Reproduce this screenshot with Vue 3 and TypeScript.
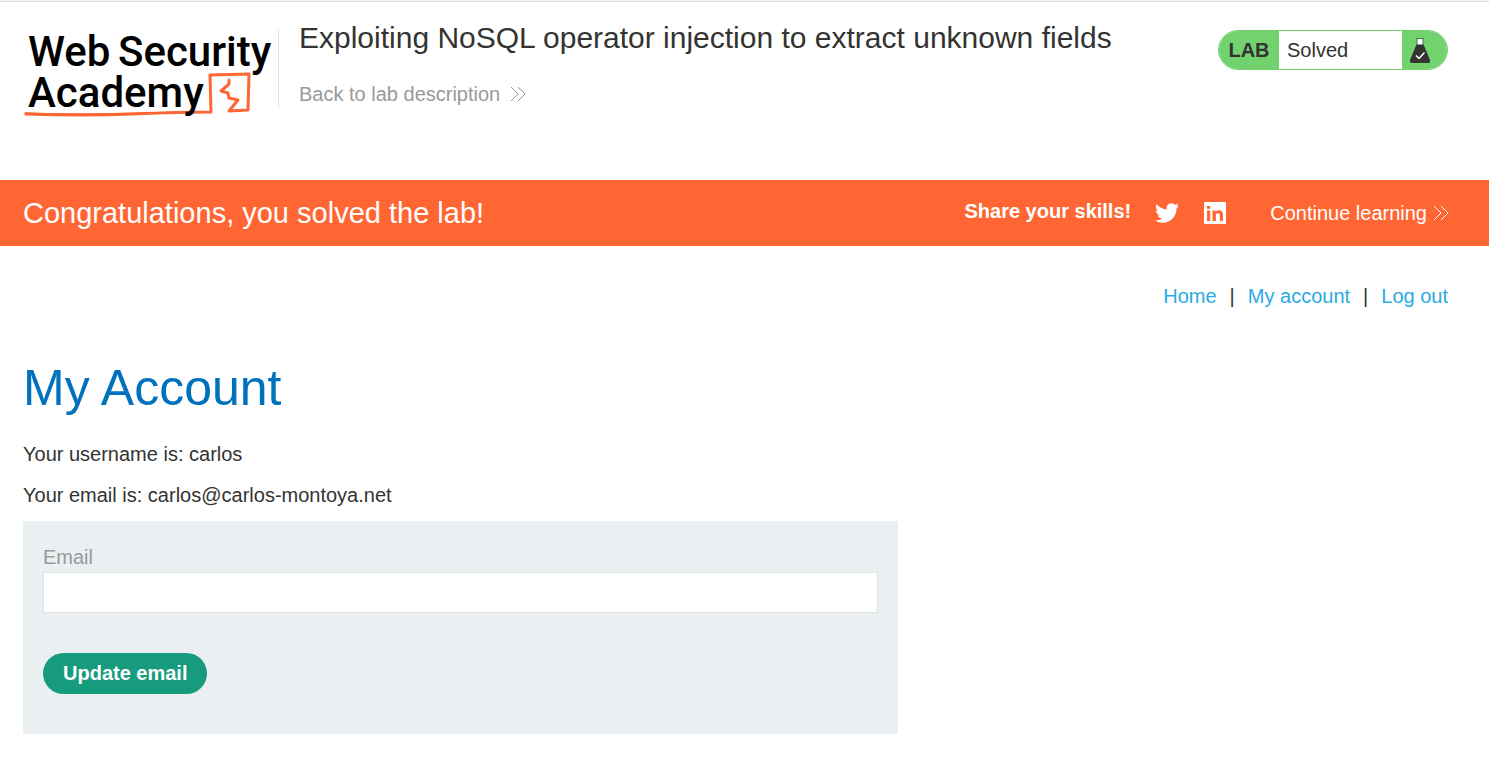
<script setup lang="ts">
import { ref } from 'vue'

interface NavLink {
  label: string
  href: string
}

const username = 'carlos'
const currentEmail = ref<string>('carlos@carlos-montoya.net')
const email = ref<string>('')

const links: NavLink[] = [
  { label: 'Home', href: '#home' },
  { label: 'My account', href: '#my-account' },
  { label: 'Log out', href: '#logout' },
]

function updateEmail(): void {
  if (email.value) {
    currentEmail.value = email.value
    email.value = ''
  }
}
</script>

<template>
  <div class="page">
    <header class="lab-header">
      <a class="logo" href="#academy" aria-label="Web Security Academy">
        <svg width="255" height="92" viewBox="0 0 255 92">
          <g fill="none" stroke="#ff6633" stroke-linejoin="round" stroke-linecap="round">
            <path d="M3 84 Q60 86 110 84 T188 82 L187 45 L226 44 L225 80 L206 81 L215 70 L206 68 L205 63 L198 61 L206 54 L206 50" stroke-width="3" />
            <path d="M2 83 Q50 85 120 83" stroke-width="1.6" />
          </g>
          <g class="logo-text">
            <text x="5" y="36">Web</text>
            <text x="95" y="36">Security</text>
            <text x="5" y="77">Academy</text>
          </g>
        </svg>
      </a>
      <div class="title">
        <h2>Exploiting NoSQL operator injection to extract unknown fields</h2>
        <a class="back" href="#lab">
          Back to lab description
          <svg width="16" height="16" viewBox="0 0 16 16" fill="none" stroke="currentColor"><path d="M1 0l7 7-7 7M8 0l7 7-7 7" /></svg>
        </a>
      </div>
      <div class="status">
        <span class="tag">LAB</span>
        <p>Solved</p>
        <span class="flask">
          <svg width="20" height="25" viewBox="0 0 20 25">
            <path d="M7 1h6v6H7z" fill="#fff" />
            <path d="M6 .5h8M7 1v6M13 1v6" fill="none" stroke="#4c7b49" />
            <path d="M6.500 6.500h7L20 22q.5 3-2 3H2q-2.500 0-2-3z" fill="#333332" />
            <path d="M6 17.500l3 3 5.500-6" fill="none" stroke="#fff" stroke-width="1.500" />
          </svg>
        </span>
      </div>
    </header>

    <section class="banner">
      <h4>Congratulations, you solved the lab!</h4>
      <div class="share">
        <span class="share-label">Share your skills!</span>
        <a href="#twitter" aria-label="Share on Twitter">
          <svg width="24" height="24" viewBox="0 0 24 24" fill="#fff"><path d="M23.953 4.570a10 10 0 01-2.825.775 4.958 4.958 0 002.163-2.723c-.951.555-2.005.959-3.127 1.184a4.920 4.920 0 00-8.384 4.482C7.690 8.095 4.067 6.130 1.640 3.162a4.822 4.822 0 00-.666 2.475c0 1.710.87 3.213 2.188 4.096a4.904 4.904 0 01-2.228-.616v.06a4.923 4.923 0 003.946 4.827 4.996 4.996 0 01-2.212.085 4.936 4.936 0 004.604 3.417 9.867 9.867 0 01-6.102 2.105c-.39 0-.779-.023-1.170-.067a13.995 13.995 0 007.557 2.209c9.053 0 13.998-7.496 13.998-13.985 0-.21 0-.42-.015-.63A9.935 9.935 0 0024 4.590z" /></svg>
        </a>
        <a href="#linkedin" aria-label="Share on LinkedIn">
          <svg width="24" height="24" viewBox="0 0 24 24"><rect x="1" y="1" width="22" height="22" rx="1" fill="#fff" /><path d="M4 9.500h3.200V20H4zM4 5h3.200v2.800H4zM9.500 9.500h3V11C14.500 8.300 20 8.500 20 13.500V20h-3.200v-5.500c0-3.500-4-3-4 0V20H9.500z" fill="#ff6633" /></svg>
        </a>
      </div>
      <a class="continue" href="#next">
        Continue learning
        <svg width="16" height="16" viewBox="0 0 16 16" fill="none" stroke="currentColor"><path d="M1 1l7 7-7 7M8 1l7 7-7 7" /></svg>
      </a>
    </section>

    <main class="content">
      <nav class="top-links">
        <template v-for="(link, i) in links" :key="link.label">
          <span v-if="i > 0">|</span>
          <a :href="link.href">{{ link.label }}</a>
        </template>
      </nav>
      <h1>My Account</h1>
      <p>Your username is: {{ username }}</p>
      <p>Your email is: {{ currentEmail }}</p>
      <form class="login-form" @submit.prevent="updateEmail">
        <label for="email">Email</label>
        <input id="email" v-model="email" type="email" name="email" />
        <button type="submit">Update email</button>
      </form>
    </main>
  </div>
</template>

<style>
body {
  margin: 0;
  background: #fff;
}
</style>

<style scoped>
.page {
  border-top: 1px solid #f6f6f6;
  color: #333332;
  font-family: "Liberation Sans", Arial, sans-serif;
  font-size: 20px;
  line-height: 25px;
}
h1, h2, h4, p {
  margin: 0;
  font-weight: 400;
}
a {
  text-decoration: none;
}
svg {
  display: block;
}
.lab-header {
  display: flex;
  align-items: flex-start;
  padding: 28px 41px 72px 23px;
  border-top: 1px solid #dcdcdc;
}
.logo {
  border-right: 1px solid #e2e2e2;
  height: 78px;
}
.logo svg {
  overflow: visible;
}
.logo-text {
  font-family: Roboto, sans-serif;
  font-size: 42px;
  font-weight: 500;
  fill: #000;
}
.title {
  flex: 1;
  padding-left: 20px;
  margin-top: -12px;
}
.title h2 {
  font-size: 30px;
  line-height: 40px;
}
.back {
  display: inline-flex;
  align-items: center;
  gap: 10px;
  margin-top: 24px;
  color: #999;
}
.status {
  display: flex;
  box-sizing: border-box;
  width: 230px;
  height: 40px;
  border: 1px solid #72d26e;
  border-radius: 20px;
  overflow: hidden;
  line-height: 38px;
}
.tag {
  width: 60px;
  background: #72d26e;
  text-align: center;
  font-weight: 700;
}
.status p {
  flex: 1;
  padding-left: 8px;
}
.flask {
  box-sizing: border-box;
  width: 45px;
  padding: 7px 0 0 8px;
  background: #72d26e;
}
.banner {
  display: flex;
  align-items: center;
  min-height: 66px;
  padding: 0 40px 0 23px;
  background: #ff6633;
  color: #fff;
}
.banner h4 {
  flex: 1;
  font-size: 29px;
  line-height: 36px;
}
.share {
  display: flex;
  align-items: center;
  gap: 24px;
}
.share-label {
  font-weight: 700;
  padding-bottom: 4px;
}
.continue {
  display: flex;
  align-items: center;
  gap: 6px;
  margin-left: 43px;
  color: #fff;
}
.content {
  padding: 38px 41px 30px 23px;
}
.top-links {
  display: flex;
  justify-content: flex-end;
  gap: 13px;
}
.top-links a {
  color: #29abe2;
}
h1 {
  margin: 49px 0 24px;
  color: #0071bc;
  font-size: 50px;
  line-height: 60px;
}
.content p {
  margin-bottom: 16px;
}
.login-form {
  box-sizing: border-box;
  max-width: 875px;
  padding: 24px 20px 40px;
  margin-top: -3px;
  background: #eaeff2;
}
label {
  display: block;
  margin-bottom: 2px;
  color: #999;
}
input {
  display: block;
  box-sizing: border-box;
  width: 100%;
  height: 41px;
  padding: 0 10px;
  border: 1px solid #e2e2e2;
  border-radius: 0;
  background: #fff;
  color: #333332;
  font: inherit;
}
button {
  display: block;
  height: 41px;
  margin-top: 40px;
  padding: 0 20px;
  border: 0;
  border-radius: 21px;
  background: #179b7f;
  color: #fff;
  font: inherit;
  font-weight: 700;
}
</style>
